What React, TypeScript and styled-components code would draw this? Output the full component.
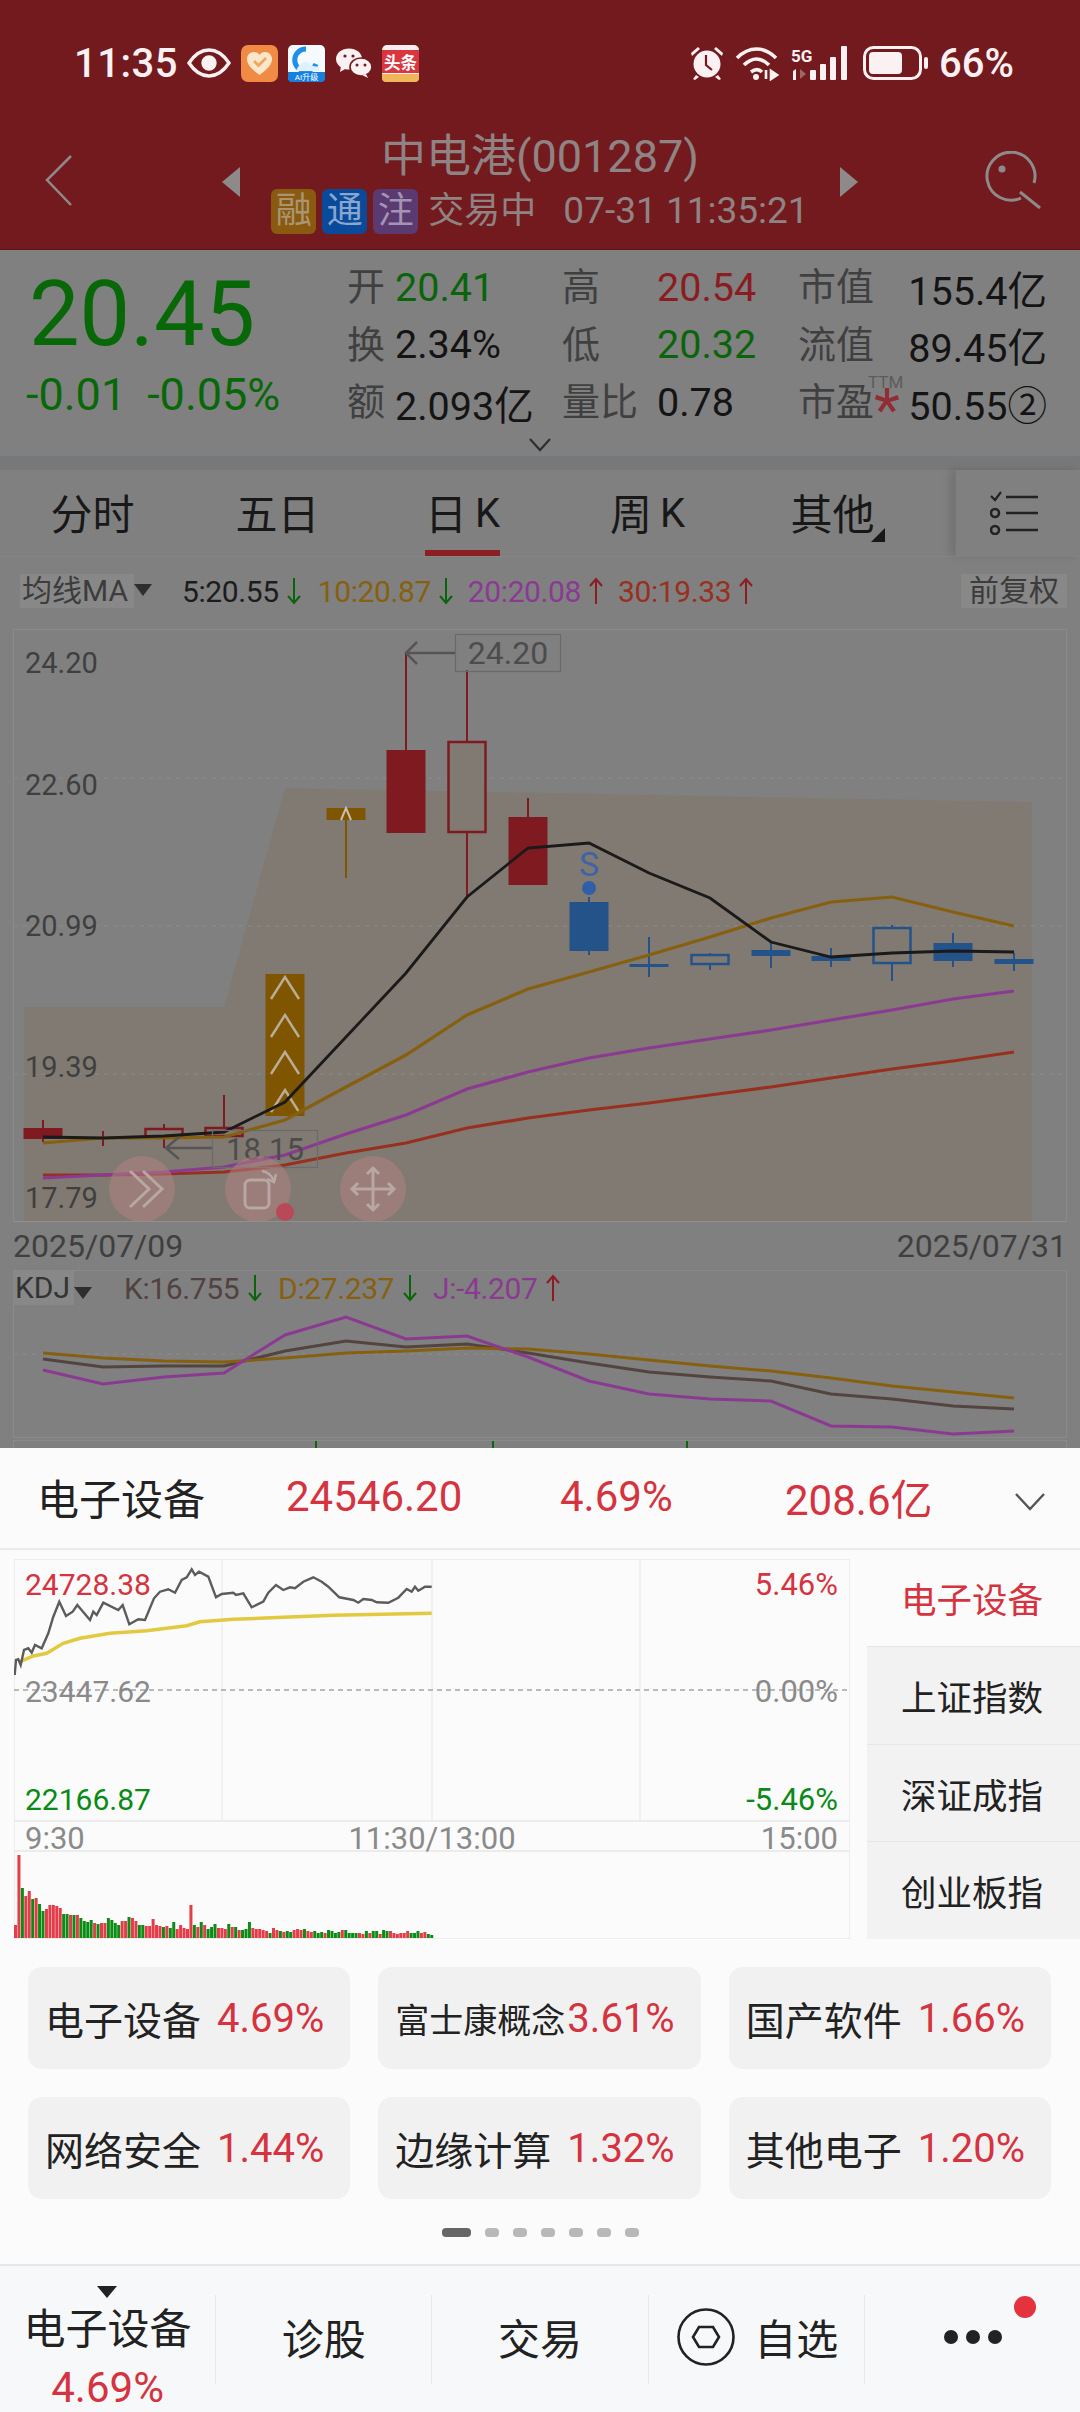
import React from "react";
import styled, { createGlobalStyle } from "styled-components";

const Global = createGlobalStyle`
  html, body { margin: 0; padding: 0; background: #808080; }
  * { box-sizing: border-box; }
  body { font-family: Roboto, "Noto Sans CJK SC", sans-serif; }
`;

const Page = styled.div`
  width: 1080px;
  height: 2412px;
  overflow: hidden;
  display: flex;
  flex-direction: column;
  background: #808080;
  font-family: Roboto, "Noto Sans CJK SC", sans-serif;
`;

const Header = styled.header`
  height: 250px;
  background: #731a1e;
  border-bottom: 1px solid #5f1518;
  flex: none;
`;
const StatusBar = styled.div`
  height: 90px;
  padding: 36px 66px 0 74px;
  display: flex;
  align-items: center;
  justify-content: space-between;
  color: #fbf0f2;
`;
const StatusGroup = styled.div`
  display: flex;
  align-items: center;
  gap: ${(p: { $gap: number }) => p.$gap}px;
`;
const Clock = styled.span`
  width: 103px;
  font-size: 40px;
  font-weight: 500;
  letter-spacing: 0.5px;
  white-space: nowrap;
`;
const Battery = styled.span`
  font-size: 40px;
  font-weight: 500;
`;
const Nav = styled.div`
  height: 159px;
  padding-top: 24px;
  display: grid;
  grid-template-columns: 222px 18px 600px 18px 222px;
  align-items: center;
  color: #8e8a8a;
`;
const BackCell = styled.div`
  padding-left: 44px;
`;
const SearchCell = styled.div`
  padding-left: 127px;
`;
const TriCell = styled.div`
  height: 30px;
`;
const NavCenter = styled.div`
  display: flex;
  flex-direction: column;
  align-items: center;
`;
const Title = styled.div`
  font-size: 45px;
  line-height: 56px;
  color: #8f8383;
`;
const SubLine = styled.div`
  display: flex;
  align-items: center;
  font-size: 36px;
  line-height: 46px;
  color: #8f8383;
  margin-top: 3px;
`;
const Tag = styled.span<{ $bg: string; $fg: string }>`
  width: 45px;
  height: 45px;
  margin-right: 6px;
  border-radius: 6px;
  background: ${(p) => p.$bg};
  color: ${(p) => p.$fg};
  font-size: 36px;
  line-height: 44px;
  text-align: center;
`;
const SubTime = styled.span`
  margin-left: 27px;
  font-size: 37px;
`;
const SubState = styled.span`
  margin-left: 4px;
`;

const Quote = styled.section`
  height: 206px;
  flex: none;
  position: relative;
  display: flex;
  background: #808080;
`;
const PriceBox = styled.div`
  width: 347px;
  flex: none;
  padding-left: 26px;
`;
const Price = styled.div`
  font-size: 90px;
  line-height: 104px;
  color: #086808;
  margin: 13px 0 0 3px;
`;
const Change = styled.div`
  display: flex;
  gap: 21px;
  font-size: 45px;
  line-height: 50px;
  color: #086808;
  margin-top: 3px;
`;
const Stats = styled.div`
  width: 700px;
  padding-top: 6px;
  display: grid;
  grid-template-columns: 215px 236px 249px;
  grid-auto-rows: 57.5px;
`;
const Stat = styled.div`
  display: flex;
  align-items: center;
  position: relative;
  justify-content: ${(p: { $split?: boolean }) => (p.$split ? "space-between" : "flex-start")};
`;
const StatLabel = styled.span<{ $w?: number }>`
  font-size: 38px;
  color: #404040;
  width: ${(p) => (p.$w ? `${p.$w}px` : "auto")};
  flex: none;
  margin-bottom: 2px;
`;
const StatValue = styled.span<{ $c?: string }>`
  font-size: 39.5px;
  color: ${(p) => p.$c || "#141414"};
  white-space: nowrap;
  margin-top: 5px;
`;
const Ttm = styled.span`
  position: absolute;
  left: 70px;
  top: 1px;
  font-size: 17px;
  color: #5c5c5c;
`;
const Star = styled.span`
  position: absolute;
  left: 76px;
  top: 9px;
  font-size: 60px;
  line-height: 60px;
  color: #8f2e34;
`;
const Expand = styled.div`
  position: absolute;
  left: 529px;
  top: 187px;
  width: 22px;
  height: 14px;
`;
const Band = styled.div`
  height: 14px;
  flex: none;
  background: #77787a;
`;
const Tabs = styled.nav`
  height: 87px;
  flex: none;
  display: flex;
  align-items: stretch;
  background: #808080;
  border-bottom: 1px solid #868686;
`;
const Tab = styled.div<{ $on?: boolean }>`
  width: 185px;
  position: relative;
  display: flex;
  align-items: center;
  justify-content: center;
  font-size: 42px;
  color: #181818;
  padding-bottom: 3px;
  ${(p) =>
    p.$on &&
    `&::after { content: ""; position: absolute; left: 55px; width: 75px; bottom: 0; height: 6px; background: #8c1f24; }`}
`;
const TabLetter = styled.span`
  margin: 4px 0 0 8px;
  font-size: 40px;
  font-weight: 400;
`;
const TabCaret = styled.span`
  position: absolute;
  right: 40px;
  bottom: 14px;
  width: 0;
  height: 0;
  border-left: 14px solid transparent;
  border-bottom: 14px solid #181818;
`;
const ListPanel = styled.div`
  width: 125px;
  margin-left: 30px;
  display: flex;
  align-items: center;
  justify-content: center;
  padding-right: 8px;
  border-left: 1px solid #777;
  box-shadow: -5px 0 8px rgba(0, 0, 0, 0.12);
`;
const MaRow = styled.div`
  height: 72px;
  flex: none;
  padding: 17px 13px 0 20px;
  display: flex;
  align-items: flex-start;
  font-size: 30px;
`;
const Picker = styled.span`
  height: 34px;
  display: flex;
  align-items: center;
  background: #888;
  padding: 0 6px 0 2px;
  font-size: 30px;
  line-height: 34px;
  color: #3c3c3c;
`;
const PickerCaret = styled.span`
  width: 0;
  height: 0;
  margin: 10px 0 0 0;
  flex: none;
  border-left: 9px solid transparent;
  border-right: 9px solid transparent;
  border-top: 12px solid #2e2e2e;
`;
const Metric = styled.span<{ $c: string; $ml?: number; $gap?: number }>`
  display: flex;
  align-items: center;
  height: 34px;
  gap: ${(p) => p.$gap ?? 8}px;
  color: ${(p) => p.$c};
  margin-left: ${(p) => p.$ml ?? 0}px;
  letter-spacing: -0.4px;
`;
const RightPill = styled.span`
  margin-left: auto;
  height: 34px;
  padding: 0 8px;
  background: #888;
  font-size: 30px;
  line-height: 34px;
  color: #3c3c3c;
`;
const ChartSvg = styled.svg`
  display: block;
  flex: none;
  font-family: Roboto, sans-serif;
`;
const Dates = styled.div`
  height: 48px;
  flex: none;
  padding: 0 13px;
  display: flex;
  justify-content: space-between;
  align-items: center;
  font-size: 32px;
  color: #3f3f3f;
`;
const KdjPanel = styled.section`
  height: 168px;
  flex: none;
  margin: 0 13px;
  border: 1px solid #8a8a8a;
  display: flex;
  flex-direction: column;
`;
const KdjLegend = styled.div`
  height: 34px;
  flex: none;
  display: flex;
  align-items: center;
  font-size: 30px;
`;
const KdjName = styled.span`
  width: 60px;
  height: 34px;
  line-height: 34px;
  background: #888;
  padding-left: 1px;
  color: #333;
  flex: none;
`;
const Stub = styled.div`
  height: 8px;
  flex: none;
  margin: 2px 13px 0;
  border: 1px solid #8a8a8a;
  border-bottom: none;
  position: relative;
`;
const Tick = styled.span<{ $x: number }>`
  position: absolute;
  left: ${(p) => p.$x}px;
  top: 0;
  width: 2px;
  height: 7px;
  background: #0a6a0a;
`;
const Sheet = styled.section`
  flex: 1;
  display: flex;
  flex-direction: column;
  background: #fbfbfc;
`;
const SheetHead = styled.div`
  height: 102px;
  flex: none;
  position: relative;
  display: flex;
  align-items: center;
  padding-bottom: 3px;
  border-bottom: 2px solid #eaeaea;
  font-size: 42px;
  color: #d53340;
`;
const HeadCell = styled.span<{ $x: number; $c?: string }>`
  position: absolute;
  left: ${(p) => p.$x}px;
  color: ${(p) => p.$c || "#d53340"};
`;
const Board = styled.div`
  height: 380px;
  flex: none;
  margin-top: 9px;
  display: flex;
`;
const MiniWrap = styled.div`
  width: 836px;
  margin-left: 14px;
  flex: none;
`;
const Side = styled.div`
  margin-left: 17px;
  flex: 1;
  display: flex;
  flex-direction: column;
`;
const SideItem = styled.div<{ $on?: boolean }>`
  flex: ${(p) => (p.$on ? "0 0 87px" : "1")};
  display: flex;
  align-items: center;
  justify-content: center;
  padding: 0 3px ${(p) => (p.$on ? "10px" : "0")} 0;
  font-size: 35.5px;
  color: ${(p) => (p.$on ? "#d53340" : "#222")};
  background: ${(p) => (p.$on ? "transparent" : "#f2f2f2")};
  border-top: ${(p) => (p.$on ? "none" : "1px solid #e6e6e6")};
`;
const Chips = styled.div`
  margin: 28px 29px 0 28px;
  display: grid;
  grid-template-columns: repeat(3, 1fr);
  gap: 28px;
`;
const Chip = styled.div`
  height: 102px;
  border-radius: 14px;
  background: #f1f1f2;
  display: flex;
  align-items: center;
  justify-content: space-between;
  padding: 0 26px 0 17px;
`;
const ChipName = styled.span<{ $small?: boolean }>`
  font-size: ${(p) => (p.$small ? 34 : 39)}px;
  color: #222;
  white-space: nowrap;
`;
const ChipPct = styled.span`
  font-size: 40px;
  color: #d53340;
  white-space: nowrap;
`;
const Dots = styled.div`
  margin-top: 29px;
  height: 9px;
  display: flex;
  justify-content: center;
  gap: 14px;
`;
const Dot = styled.span<{ $on?: boolean }>`
  width: ${(p) => (p.$on ? 29 : 14)}px;
  height: 9px;
  border-radius: 4px;
  background: ${(p) => (p.$on ? "#666" : "#b8b8b8")};
`;
const Bar = styled.footer`
  margin-top: 27px;
  flex: 1;
  display: grid;
  grid-template-columns: repeat(5, 216.2px);
  padding-top: 29px;
  background: #f7f8fa;
  border-top: 2px solid #e7e8ec;
  position: relative;
`;
const BarCell = styled.div<{ $last?: boolean }>`
  height: 89px;
  position: relative;
  display: flex;
  align-items: center;
  justify-content: center;
  font-size: 42px;
  color: #222;
  border-right: ${(p) => (p.$last ? "none" : "1px solid #e8e8ec")};
  padding-bottom: 6px;
`;
const WatchCell = styled(BarCell)`
  gap: 19px;
  padding-left: 3px;
`;
const BarStack = styled.div`
  position: absolute;
  left: 0;
  right: 0;
  top: 10px;
  text-align: center;
  font-size: 42px;
  line-height: 50px;
`;
const BarCaret = styled.span`
  display: block;
  width: 0;
  height: 0;
  position: absolute;
  left: 97px;
  top: -9px;
  border-left: 10px solid transparent;
  border-right: 10px solid transparent;
  border-top: 12px solid #222;
`;
const BarPct = styled.div`
  color: #d53340;
  margin-top: 8px;
`;
const Notice = styled.span`
  position: absolute;
  left: 149px;
  top: 1px;
  width: 22px;
  height: 22px;
  border-radius: 50%;
  background: #e5333e;
`;
const MoreDots = styled.div`
  display: flex;
  gap: 8px;
`;
const MoreDot = styled.span`
  width: 14px;
  height: 14px;
  border-radius: 50%;
  background: #222;
`;

type C = [number, number, number, number, number, string, boolean];
const RED = "#7e1a20";
const BLUE = "#24538a";
const ORG = "#7f5500";
const candles: C[] = [
  [43, 1120, 1142, 1128, 1139, RED, true],
  [103, 1131, 1146, 1137, 1138, RED, true],
  [164, 1124, 1148, 1128, 1138, RED, false],
  [224, 1095, 1138, 1127, 1137, RED, false],
  [285, 974, 1116, 974, 1116, ORG, true],
  [346, 808, 878, 808, 820, ORG, true],
  [406, 653, 833, 750, 833, RED, true],
  [467, 670, 897, 741, 833, RED, false],
  [528, 798, 885, 817, 885, RED, true],
  [589, 897, 955, 902, 951, BLUE, true],
  [649, 937, 977, 964, 967, BLUE, true],
  [710, 953, 970, 954, 965, BLUE, false],
  [771, 943, 968, 950, 956, BLUE, true],
  [831, 948, 967, 956, 961, BLUE, true],
  [892, 925, 981, 927, 964, BLUE, false],
  [953, 933, 967, 943, 961, BLUE, true],
  [1014, 953, 971, 959, 964, BLUE, true],
];
const xs = [43, 103, 164, 224, 285, 346, 406, 467, 528, 589, 649, 710, 771, 831, 892, 953, 1014];
const pts = (ys: number[]) => ys.map((y, i) => `${xs[i]},${y}`).join(" ");
const ma5 = [1137, 1138, 1136, 1132, 1102, 1037, 973, 897, 848, 843, 873, 898, 942, 957, 953, 951, 952];
const ma10 = [1143, 1138, 1138, 1137, 1120, 1087, 1055, 1015, 989, 972, 955, 937, 918, 902, 897, 912, 926];
const ma20 = [1178, 1175, 1172, 1167, 1155, 1134, 1115, 1089, 1072, 1058, 1048, 1039, 1030, 1020, 1010, 999, 991];
const ma30 = [1175, 1175, 1174, 1172, 1165, 1153, 1143, 1128, 1118, 1110, 1103, 1095, 1087, 1078, 1069, 1061, 1052];
const kK = [1359, 1367, 1366, 1366, 1351, 1341, 1347, 1344, 1353, 1363, 1372, 1377, 1381, 1394, 1399, 1406, 1409];
const kD = [1353, 1358, 1361, 1362, 1358, 1353, 1351, 1348, 1349, 1354, 1360, 1366, 1371, 1378, 1386, 1392, 1398];
const kJ = [1370, 1384, 1377, 1373, 1335, 1317, 1339, 1336, 1357, 1381, 1394, 1399, 1401, 1426, 1427, 1434, 1431];

const priceRaw = [44,345,48,300,55,298,62,315,72,270,85,265,95,278,105,255,125,265,145,220,160,170,178,125,198,168,218,155,232,135,270,180,280,155,290,165,310,128,355,150,368,135,388,193,415,178,435,180,462,115,480,95,505,88,525,98,545,60,560,52,575,28,585,45,597,35,625,50,648,112,665,102,700,98,708,105,730,100,755,142,790,125,805,98,828,75,850,90,870,82,885,85,910,65,940,52,965,65,985,80,1018,112,1060,120,1075,128,1090,117,1115,120,1130,127,1165,128,1195,113,1220,87,1235,95,1245,80,1255,92,1275,80,1295,80];
const avgRaw = [60,305,100,288,140,280,190,250,240,235,330,220,440,212,560,197,600,185,700,178,850,172,1000,166,1295,160];
const toPts = (a: number[]) => {
  const out: string[] = [];
  for (let i = 0; i < a.length; i += 2) out.push(`${(a[i] / 3).toFixed(1)},${(1560 + a[i + 1] / 3).toFixed(1)}`);
  return out.join(" ");
};
const vols = [13,83,-50,42,47,-39,40,-34,-27,29,33,33,32,30,-24,-24,23,-23,23,-20,-17,-16,-18,15,-14,15,15,-20,-18,-15,-13,17,17,-21,20,17,-13,-13,12,12,19,13,12,-11,12,-10,-16,9,13,10,9,33,-13,11,-16,13,-9,-11,-14,10,10,9,-14,11,-11,8,-8,-9,-16,10,9,9,8,7,-5,10,8,-7,6,-7,-6,8,9,8,-9,7,6,-7,-5,-6,5,-8,-7,-5,-6,8,-8,-5,-5,-5,5,4,-7,5,-7,-7,4,-8,-7,7,5,4,5,5,7,-5,-5,-7,5,6,-4,-3];

const Arrow = ({ up, c }: { up?: boolean; c: string }) => (
  <svg width="14" height="28" viewBox="0 0 14 28" fill="none" stroke={c} strokeWidth="2">
    {up ? <path d="M7 27V2M1 9l6-7 6 7" /> : <path d="M7 1v25M1 19l6 7 6-7" />}
  </svg>
);

const Eye = () => (
  <svg width="44" height="30" viewBox="0 0 44 30" fill="none" stroke="currentColor" strokeWidth="3.4">
    <path d="M2 15C8 6 15 2 22 2s14 4 20 13c-6 9-13 13-20 13S8 24 2 15z" />
    <circle cx="22" cy="15" r="6" fill="currentColor" />
  </svg>
);
const OrangeApp = () => (
  <svg width="37" height="37" viewBox="0 0 37 37">
    <rect width="37" height="37" rx="7" fill="#f08a45" />
    <path d="M18.5 30C10 24 6 19 6 14c0-4 3-7 7-7 2.500 0 4.500 1 5.500 3 1-2 3-3 5.500-3 4 0 7 3 7 7 0 5-4 10-12.500 16z" fill="#fbe6c9" />
    <path d="M13 16l4.500 4.500L25 13" fill="none" stroke="#f0a860" strokeWidth="2.800" />
  </svg>
);
const BlueApp = () => (
  <svg width="37" height="37" viewBox="0 0 37 37">
    <rect width="37" height="37" rx="5" fill="#f4fafe" />
    <path d="M18 4a11 11 0 1 0 10 15" fill="none" stroke="#1f8fea" strokeWidth="5" />
    <path d="M10 22c4-6 9-6 12-3s6 2 9 3v4H8z" fill="#dff1fd" />
    <path d="M0 27h37v6a4 4 0 0 1-4 4H4a4 4 0 0 1-4-4z" fill="#167fe0" />
    <text x="18.500" y="35" fontSize="8" fill="#fff" textAnchor="middle">AI升级</text>
  </svg>
);
const Wechat = () => (
  <svg width="37" height="30" viewBox="0 0 37 30" fill="currentColor">
    <ellipse cx="14" cy="11" rx="13" ry="10.500" />
    <path d="M6 18l-1 6 7-4z" />
    <ellipse cx="26" cy="19" rx="11" ry="9" stroke="#731a1e" strokeWidth="1.600" />
    <path d="M31 26l2 4-6-3z" />
    <circle cx="10" cy="8" r="1.600" fill="#731a1e" />
    <circle cx="18" cy="8" r="1.600" fill="#731a1e" />
    <circle cx="22" cy="17" r="1.500" fill="#731a1e" />
    <circle cx="30" cy="17" r="1.500" fill="#731a1e" />
  </svg>
);
const Toutiao = () => (
  <svg width="37" height="37" viewBox="0 0 37 37">
    <rect width="37" height="37" rx="5" fill="#fbeeee" />
    <rect y="5" width="37" height="23" fill="#d93640" />
    <path d="M0 29h37v4a4 4 0 0 1-4 4H4a4 4 0 0 1-4-4z" fill="#f0b65c" />
    <text x="18.500" y="24" fontSize="16.500" fontWeight="700" fill="#fff" textAnchor="middle">头条</text>
  </svg>
);
const Alarm = () => (
  <svg width="36" height="36" viewBox="0 0 36 36" fill="currentColor">
    <circle cx="18" cy="19" r="13.500" />
    <path d="M2 8l7-6 2 2-8 7zM34 8l-7-6-2 2 8 7zM7 30l-3 4 2 1 4-3zM29 30l3 4-2 1-4-3z" />
    <path d="M17 10v10l6 5" fill="none" stroke="#731a1e" strokeWidth="2.200" />
  </svg>
);
const Wifi = () => (
  <svg width="46" height="36" viewBox="0 0 46 36" fill="none" stroke="currentColor" strokeWidth="3.600">
    <path d="M2 13C14 1 29 1 41 13M9 20c8-8 17-8 25 0M16 27c4-3 8-3 11 0" />
    <circle cx="21" cy="32" r="3" fill="currentColor" stroke="none" />
    <path d="M31 34V25M36 26v8l6-4z" strokeWidth="2.600" fill="currentColor" />
  </svg>
);
const Signal = () => (
  <svg width="62" height="36" viewBox="0 0 62 36" fill="currentColor">
    <text x="0" y="17" fontSize="17" fontWeight="700">5G</text>
    <path d="M2 26l3-2v11H2z" />
    <path d="M9 24l6 5-6 5z" opacity=".35" />
    <rect x="19" y="25" width="6" height="10" rx="1" />
    <rect x="29" y="19" width="6" height="16" rx="1" />
    <rect x="39" y="12" width="6" height="23" rx="1" />
    <rect x="50" y="1" width="6" height="34" rx="1" />
  </svg>
);
const BatteryIcon = () => (
  <svg width="66" height="34" viewBox="0 0 66 34">
    <rect x="1.500" y="1.500" width="56" height="31" rx="9" fill="none" stroke="currentColor" strokeWidth="3" />
    <rect x="6" y="6" width="33" height="22" rx="4" fill="currentColor" />
    <rect x="61" y="11" width="4" height="12" rx="2" fill="currentColor" />
  </svg>
);

const Label = ({ y, t }: { y: number; t: string }) => (
  <text x="25" y={y + 10} fontSize="29" fill="#3f3f3f">{t}</text>
);

const Chart = () => (
  <ChartSvg width="1080" height="593" viewBox="0 629 1080 593">
    <rect x="13.500" y="629.500" width="1053" height="592" fill="#808080" stroke="#8a8a8a" />
    <polygon points="24,1007 224,1007 285,788 1032,802 1032,1221 24,1221" fill="#807a72" />
    {[778, 926, 1074].map((y) => (
      <line key={y} x1="14" x2="1066" y1={y} y2={y} stroke="#8b8b8b" strokeDasharray="4 5" />
    ))}
    <Label y={663} t="24.20" />
    <Label y={785} t="22.60" />
    <Label y={926} t="20.99" />
    <Label y={1067} t="19.39" />
    <Label y={1198} t="17.79" />
    {candles.map(([x, wt, wb, bt, bb, c, solid]) => (
      <g key={x}>
        <line x1={x} x2={x} y1={wt} y2={wb} stroke={c} strokeWidth="2" />
        {solid ? (
          <rect x={x - 19.500} y={bt} width="39" height={bb - bt} fill={c} />
        ) : (
          <rect x={x - 18.500} y={bt + 1} width="37" height={bb - bt - 2} fill="#807a72" stroke={c} strokeWidth="2.500" />
        )}
      </g>
    ))}
    <g fill="none" stroke="#b9ad94" strokeWidth="2.500">
      <path d="M271 999l14-22 14 22M271 1037l14-22 14 22M271 1074l14-22 14 22M271 1112l14-22 14 22" />
    </g>
    <path d="M341 820l5-12 5 12" fill="none" stroke="#c8c0b0" strokeWidth="2" />
    <text x="589" y="876" fontSize="34" fill="#3c64a6" textAnchor="middle">S</text>
    <ellipse cx="589" cy="888" rx="7" ry="7" fill="#2f5fa6" />
    <polyline points={pts(ma30)} fill="none" stroke="#98301f" strokeWidth="3.200" />
    <polyline points={pts(ma20)} fill="none" stroke="#8b3a92" strokeWidth="3.200" />
    <polyline points={pts(ma10)} fill="none" stroke="#86600f" strokeWidth="3.200" />
    <polyline points={pts(ma5)} fill="none" stroke="#1a1a1a" strokeWidth="2.800" />
    <g fill="none" stroke="#555" strokeWidth="2.500">
      <path d="M408 653h47M417 642l-11 11 11 11" />
      <path d="M165 1148h47M179 1137l-13 11 13 11" />
    </g>
    <rect x="455.500" y="634.500" width="105" height="37" fill="#808080" fillOpacity=".25" stroke="#6a6a6a" strokeWidth="1.200" />
    <rect x="212.500" y="1130.500" width="105" height="37" fill="none" stroke="#6a6a6a" strokeWidth="1.200" />
    <text x="508" y="664" fontSize="32" fill="#4c4c4c" textAnchor="middle">24.20</text>
    <text x="265" y="1160" fontSize="31" fill="#4c4c4c" textAnchor="middle">18.15</text>
    <g fill="#b08080" fillOpacity=".55">
      <circle cx="142" cy="1189" r="33" />
      <circle cx="258" cy="1189" r="33" />
      <circle cx="373" cy="1189" r="33" />
    </g>
    <g fill="none" stroke="#b8a7a3" strokeWidth="3">
      <path d="M130 1171l19 18-19 18M143 1171l19 18-19 18" />
      <rect x="245" y="1180" width="24" height="28" rx="5" />
      <path d="M262 1171c6 1 10 5 12 10M276 1174l-2 8-7-3" strokeWidth="2.500" />
      <path d="M373 1168v42M352 1189h42M367 1174l6-6 6 6M367 1204l6 6 6-6M358 1183l-6 6 6 6M388 1183l6 6-6 6" />
    </g>
    <circle cx="285" cy="1212" r="9" fill="#b84a58" />
    <line x1="13" x2="1067" y1="1221.500" y2="1221.500" stroke="#92908c" />
  </ChartSvg>
);

const Mini = () => (
  <ChartSvg width="836" height="380" viewBox="14 1559 836 380">
    <rect x="14.500" y="1559.500" width="835" height="379" fill="#fbfbfc" stroke="#ececec" />
    {[222, 432, 640].map((x) => (
      <line key={x} x1={x} x2={x} y1="1559" y2="1821" stroke="#eeeeee" strokeWidth="1.500" />
    ))}
    <line x1="14" x2="850" y1="1821" y2="1821" stroke="#ececec" strokeWidth="2" />
    <line x1="14" x2="850" y1="1851" y2="1851" stroke="#ececec" strokeWidth="2" />
    <line x1="14" x2="850" y1="1690" y2="1690" stroke="#b9b9b9" strokeWidth="2" strokeDasharray="5 4" />
    <polyline points={toPts(avgRaw)} fill="none" stroke="#e3c93f" strokeWidth="3.500" />
    <polyline points={toPts(priceRaw)} fill="none" stroke="#5c5c5c" strokeWidth="2.400" />
    <g fontSize="30">
      <text x="25" y="1595" fill="#d53340">24728.38</text>
      <text x="25" y="1702" fill="#8a8a8a">23447.62</text>
      <text x="25" y="1810" fill="#0a8a16">22166.87</text>
    </g>
    <g fontSize="31">
      <text x="838" y="1595" fill="#d53340" textAnchor="end">5.46%</text>
      <text x="838" y="1702" fill="#8a8a8a" textAnchor="end">0.00%</text>
      <text x="838" y="1810" fill="#0a8a16" textAnchor="end">-5.46%</text>
      <text x="25" y="1849" fill="#8a8a8a">9:30</text>
      <text x="432" y="1849" fill="#8a8a8a" textAnchor="middle">11:30/13:00</text>
      <text x="838" y="1849" fill="#8a8a8a" textAnchor="end">15:00</text>
    </g>
    {vols.map((v, i) => (
      <rect key={i} x={14 + i * 3.44} y={1938 - Math.abs(v)} width="3" height={Math.abs(v)} fill={v > 0 ? "#e43c48" : "#0c8c14"} />
    ))}
  </ChartSvg>
);

const chips: [string, string, boolean?][] = [
  ["电子设备", "4.69%"],
  ["富士康概念", "3.61%", true],
  ["国产软件", "1.66%"],
  ["网络安全", "1.44%"],
  ["边缘计算", "1.32%"],
  ["其他电子", "1.20%"],
];

export default function App() {
  return (
    <Page>
      <Global />
      <Header>
        <StatusBar>
          <StatusGroup $gap={10}>
            <Clock>11:35</Clock>
            <Eye />
            <OrangeApp />
            <BlueApp />
            <Wechat />
            <Toutiao />
          </StatusGroup>
          <StatusGroup $gap={10}>
            <Alarm />
            <Wifi />
            <Signal />
            <BatteryIcon />
            <Battery>66%</Battery>
          </StatusGroup>
        </StatusBar>
        <Nav>
          <BackCell>
            <svg width="30" height="52" viewBox="0 0 30 52" fill="none" stroke="#8e8a8a" strokeWidth="2.500">
              <path d="M27 2L3 26l24 25" />
            </svg>
          </BackCell>
          <TriCell>
            <svg width="18" height="30" viewBox="0 0 18 30"><path d="M18 0v30L0 15z" fill="#8e8a8a" /></svg>
          </TriCell>
          <NavCenter>
            <Title>中电港(001287)</Title>
            <SubLine>
              <Tag $bg="#8a5a10" $fg="#a99572">融</Tag>
              <Tag $bg="#0a4a9a" $fg="#88a6d0">通</Tag>
              <Tag $bg="#5a3a70" $fg="#a394b4">注</Tag>
              <SubState>交易中</SubState>
              <SubTime>07-31 11:35:21</SubTime>
            </SubLine>
          </NavCenter>
          <TriCell>
            <svg width="18" height="30" viewBox="0 0 18 30"><path d="M0 0v30l18-15z" fill="#8e8a8a" /></svg>
          </TriCell>
          <SearchCell>
            <svg width="58" height="58" viewBox="0 0 58 58" fill="none" stroke="#8e8a8a" strokeWidth="3">
              <path d="M36 47A24 24 0 1 1 49 32" />
              <path d="M35 41l20 16" />
              <circle cx="17" cy="18" r="3.500" fill="#8e8a8a" stroke="none" />
            </svg>
          </SearchCell>
        </Nav>
      </Header>

      <Quote>
        <PriceBox>
          <Price>20.45</Price>
          <Change>
            <span>-0.01</span>
            <span>-0.05%</span>
          </Change>
        </PriceBox>
        <Stats>
          <Stat><StatLabel $w={48}>开</StatLabel><StatValue $c="#0a640a">20.41</StatValue></Stat>
          <Stat><StatLabel $w={95}>高</StatLabel><StatValue $c="#8a1c22">20.54</StatValue></Stat>
          <Stat $split><StatLabel>市值</StatLabel><StatValue>155.4亿</StatValue></Stat>
          <Stat><StatLabel $w={48}>换</StatLabel><StatValue>2.34%</StatValue></Stat>
          <Stat><StatLabel $w={95}>低</StatLabel><StatValue $c="#0a640a">20.32</StatValue></Stat>
          <Stat $split><StatLabel>流值</StatLabel><StatValue>89.45亿</StatValue></Stat>
          <Stat><StatLabel $w={48}>额</StatLabel><StatValue>2.093亿</StatValue></Stat>
          <Stat><StatLabel $w={95}>量比</StatLabel><StatValue>0.78</StatValue></Stat>
          <Stat $split>
            <StatLabel>市盈</StatLabel>
            <Ttm>TTM</Ttm>
            <Star>*</Star>
            <StatValue>50.55②</StatValue>
          </Stat>
        </Stats>
        <Expand>
          <svg width="22" height="14" viewBox="0 0 22 14" fill="none" stroke="#2f2f2f" strokeWidth="2.200">
            <path d="M1 1l10 11L21 1" />
          </svg>
        </Expand>
      </Quote>
      <Band />
      <Tabs>
        <Tab>分时</Tab>
        <Tab>五日</Tab>
        <Tab $on>日<TabLetter>K</TabLetter></Tab>
        <Tab>周<TabLetter>K</TabLetter></Tab>
        <Tab>其他<TabCaret /></Tab>
        <ListPanel>
          <svg width="48" height="44" viewBox="0 0 48 44" fill="none" stroke="#222" strokeWidth="2.600">
            <path d="M16 6h32M16 22h32M16 39h32" />
            <path d="M1 5l4 4 6-8" strokeWidth="2.200" />
            <circle cx="5" cy="22" r="4" />
            <circle cx="5" cy="39" r="4" />
          </svg>
        </ListPanel>
      </Tabs>
      <MaRow>
        <Picker>均线MA</Picker>
        <PickerCaret />
        <Metric $c="#1c1c1c" $ml={30}>5:20.55<Arrow c="#0a640a" /></Metric>
        <Metric $c="#86600f" $ml={17}>10:20.87<Arrow c="#0a640a" /></Metric>
        <Metric $c="#8b3a92" $ml={15}>20:20.08<Arrow up c="#8a1c22" /></Metric>
        <Metric $c="#98301f" $ml={15}>30:19.33<Arrow up c="#8a1c22" /></Metric>
        <RightPill>前复权</RightPill>
      </MaRow>
      <Chart />
      <Dates>
        <span>2025/07/09</span>
        <span>2025/07/31</span>
      </Dates>
      <KdjPanel>
        <KdjLegend>
          <KdjName>KDJ</KdjName>
          <PickerCaret />
          <Metric $c="#52423f" $ml={32} $gap={9}>K:16.755<Arrow c="#0a640a" /></Metric>
          <Metric $c="#86600f" $ml={16} $gap={9}>D:27.237<Arrow c="#0a640a" /></Metric>
          <Metric $c="#8b3a92" $ml={16} $gap={9}>J:-4.207<Arrow up c="#8a1c22" /></Metric>
        </KdjLegend>
        <ChartSvg width="1052" height="133" viewBox="14 1305 1052 133">
          <line x1="14" x2="1066" y1="1354" y2="1354" stroke="#8b8b8b" strokeDasharray="4 5" />
          <polyline points={pts(kK)} fill="none" stroke="#544440" strokeWidth="3" />
          <polyline points={pts(kD)} fill="none" stroke="#86600f" strokeWidth="3" />
          <polyline points={pts(kJ)} fill="none" stroke="#8b3a92" strokeWidth="3" />
        </ChartSvg>
      </KdjPanel>
      <Stub>
        <Tick $x={301} />
        <Tick $x={478} />
        <Tick $x={672} />
      </Stub>
      <Sheet>
        <SheetHead>
          <HeadCell $x={37} $c="#222">电子设备</HeadCell>
          <HeadCell $x={286}>24546.20</HeadCell>
          <HeadCell $x={560}>4.69%</HeadCell>
          <HeadCell $x={785}>208.6亿</HeadCell>
          <HeadCell $x={1015}>
            <svg width="30" height="18" viewBox="0 0 30 18" fill="none" stroke="#555" strokeWidth="2.400">
              <path d="M1 1l14 15L29 1" />
            </svg>
          </HeadCell>
        </SheetHead>
        <Board>
          <MiniWrap><Mini /></MiniWrap>
          <Side>
            <SideItem $on>电子设备</SideItem>
            <SideItem>上证指数</SideItem>
            <SideItem>深证成指</SideItem>
            <SideItem>创业板指</SideItem>
          </Side>
        </Board>
        <Chips>
          {chips.map(([n, p, small]) => (
            <Chip key={n}>
              <ChipName $small={small}>{n}</ChipName>
              <ChipPct>{p}</ChipPct>
            </Chip>
          ))}
        </Chips>
        <Dots>
          <Dot $on />
          <Dot /><Dot /><Dot /><Dot /><Dot /><Dot />
        </Dots>
        <Bar>
          <BarCell>
            <BarCaret />
            <BarStack>
              电子设备
              <BarPct>4.69%</BarPct>
            </BarStack>
          </BarCell>
          <BarCell>诊股</BarCell>
          <BarCell>交易</BarCell>
          <WatchCell>
            <svg width="58" height="58" viewBox="0 0 58 58" fill="none" stroke="#222" strokeWidth="2.600">
              <circle cx="29" cy="29" r="27.500" />
              <path d="M22 19h14l6 10-6 10H22l-6-10z" />
            </svg>
            自选
          </WatchCell>
          <BarCell $last>
            <MoreDots><MoreDot /><MoreDot /><MoreDot /></MoreDots>
            <Notice />
          </BarCell>
        </Bar>
      </Sheet>
    </Page>
  );
}
